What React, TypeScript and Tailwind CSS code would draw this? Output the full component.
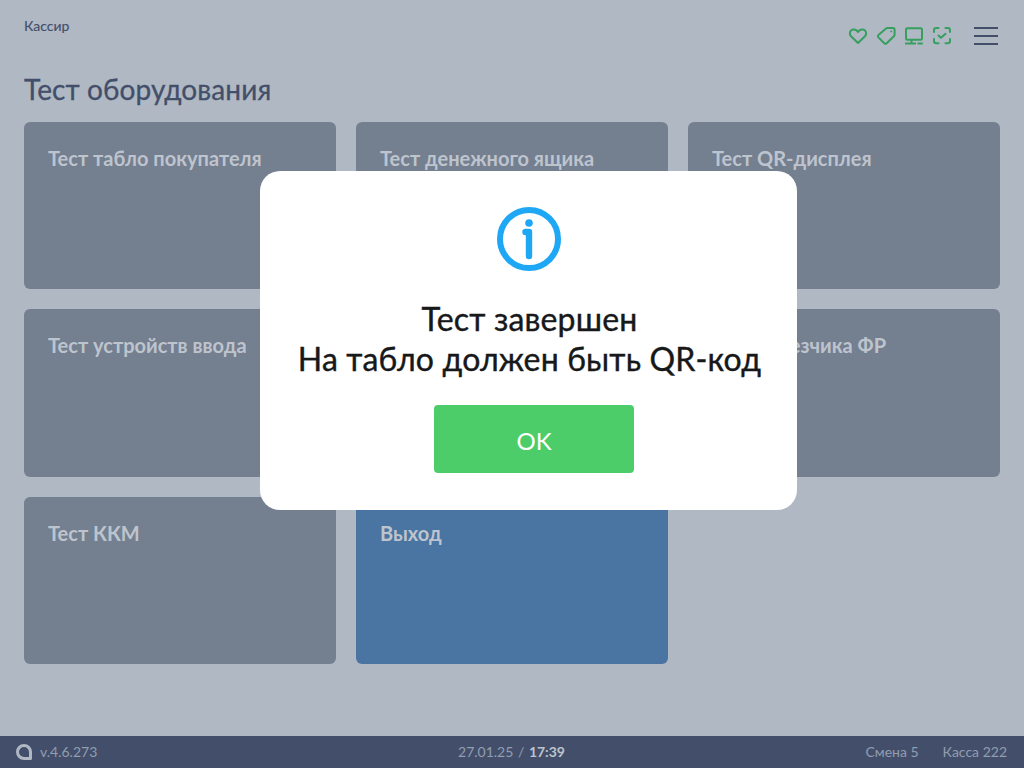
import React from 'react';

const cards = [
  { id: 1, name: 'Тест табло покупателя' },
  { id: 2, name: 'Тест денежного ящика' },
  { id: 3, name: 'Тест QR-дисплея' },
  { id: 4, name: 'Тест устройств ввода' },
  { id: 5, name: '' },
  { id: 6, name: 'Тест отрезчика ФР' },
  { id: 7, name: 'Тест ККМ' },
  { id: 8, name: 'Выход', exit: true },
];

const StatusIcons: React.FC = () => (
  <div className="flex items-center gap-2 text-[#369f5e]">
    <svg width="20" height="20" viewBox="0 0 20 20" fill="none" stroke="currentColor" strokeWidth="2" strokeLinejoin="round">
      <path d="M10 17 L3 10.2 C1 8 1.6 4.2 4.8 3.5 C7 3.1 9 4.2 10 6 C11 4.2 13 3.1 15.2 3.5 C18.4 4.2 19 8 17 10.2 Z" />
    </svg>
    <svg width="20" height="20" viewBox="0 0 20 20" fill="none" stroke="currentColor" strokeWidth="2" strokeLinejoin="round">
      <path d="M11.5 2 H17 C17.8 2 18.6 2.7 18.6 3.6 V8.5 C18.6 9.2 18.4 9.7 17.9 10.2 L10.7 17.2 C10 17.9 9 17.9 8.3 17.2 L2.4 11.4 C1.7 10.7 1.7 9.7 2.4 9 L9.8 2.7 C10.3 2.2 10.8 2 11.5 2 Z" />
      <circle cx="15.2" cy="5.4" r="0.9" fill="currentColor" stroke="none" />
    </svg>
    <svg width="20" height="20" viewBox="0 0 20 20" fill="none" stroke="currentColor" strokeWidth="2">
      <rect x="2" y="2.2" width="16" height="11.6" rx="1.4" />
      <path d="M7.5 13.8 V17.4 M1 17.4 H12 M13.4 17.4 H18.8" />
    </svg>
    <svg width="20" height="20" viewBox="0 0 20 20" fill="none" stroke="currentColor" strokeWidth="2" strokeLinecap="round" strokeLinejoin="round">
      <path d="M2 6 V4.2 C2 2.9 3 1.9 4.3 1.9 H6.5 M13.5 1.9 H15.7 C17 1.9 18 2.9 18 4.2 V6 M18 13 V15 C18 16.3 17 17.3 15.7 17.3 H13.5 M6.5 17.3 H4.3 C3 17.3 2 16.3 2 15 V13" />
      <path d="M6.5 9.5 L9 11.8 L13.5 7.8" />
    </svg>
  </div>
);

const App: React.FC = () => {
  return (
    <div className="relative flex h-[768px] w-[1024px] flex-col overflow-hidden bg-[#b0b8c4] font-['Lato','Noto_Sans',sans-serif]">
      <div className="flex-1 px-6">
        <div className="flex h-[68px] items-start justify-between">
          <span className="mt-[17px] text-sm leading-[17px] text-[#434f6a] [-webkit-text-stroke:0.15px_#434f6a]">Кассир</span>
          <div className="mr-[2px] mt-[26px] flex items-center">
            <StatusIcons />
            <div className="ml-[22px] flex w-6 flex-col gap-[6px]">
              <div className="h-0.5 bg-[#434f6a]" />
              <div className="h-0.5 bg-[#434f6a]" />
              <div className="h-0.5 bg-[#434f6a]" />
            </div>
          </div>
        </div>
        <h1 className="h-[54px] pt-1 text-[28px] leading-[34px] tracking-[0.1px] text-[#434f6a] [-webkit-text-stroke:0.3px_#434f6a]">Тест оборудования</h1>
        <div className="grid grid-cols-[312px_312px_312px] gap-x-5 gap-y-5">
          {cards.map(card => (
            <div
              key={card.id}
              className={`h-[167.3px] rounded-md px-6 pt-[23px] text-xl font-bold leading-[26px] text-[#bec4cd] ${card.exit ? 'bg-[#4a75a2]' : 'bg-[#747f90]'}`}
            >
              {card.name}
            </div>
          ))}
        </div>
      </div>

      <div className="flex h-8 items-center bg-[#434f6a] pl-4 pr-[17px] text-sm text-[#919db0]">
        <div className="flex w-[300px] items-center gap-2">
          <svg width="16" height="16" viewBox="0 0 16 16" fill="none">
            <path d="M8 1.5 A6.5 6.5 0 1 0 8 14.5 H14.5 V8 A6.5 6.5 0 0 0 8 1.5 Z" stroke="#b0b8c4" strokeWidth="3" strokeLinejoin="round" />
          </svg>
          <span>v.4.6.273</span>
        </div>
        <div className="flex-1 text-center">
          27.01.25 <span className="mx-px">/</span> <span className="font-bold text-[#bec4cd]">17:39</span>
        </div>
        <div className="flex w-[300px] justify-end gap-6">
          <span>Смена 5</span>
          <span>Касса 222</span>
        </div>
      </div>

      <div className="absolute left-[260px] top-[171px] flex h-[338.5px] w-[537px] flex-col items-center rounded-[20px] bg-white pt-9">
        <svg width="64" height="64" viewBox="0 0 64 64" fill="none">
          <circle cx="32" cy="32" r="29" stroke="#1ea7f4" strokeWidth="6" />
          <circle cx="32" cy="16" r="3.8" fill="#1ea7f4" />
          <path d="M28.5 25 H32 V49" stroke="#1ea7f4" strokeWidth="6.4" strokeLinecap="round" strokeLinejoin="round" />
        </svg>
        <div className="ml-[2px] mt-[28px] text-center text-[32px] leading-10 tracking-[0.16px] text-[#17181a] [-webkit-text-stroke:0.4px_#17181a]">
          <div>Тест завершен</div>
          <div>На табло должен быть QR-код</div>
        </div>
        <button className="ml-[11px] mt-[26px] h-[68px] w-[200px] rounded-[4px] bg-[#4ccd6a] pt-[3px] text-2xl text-white">OK</button>
      </div>
    </div>
  );
};

export default App;
